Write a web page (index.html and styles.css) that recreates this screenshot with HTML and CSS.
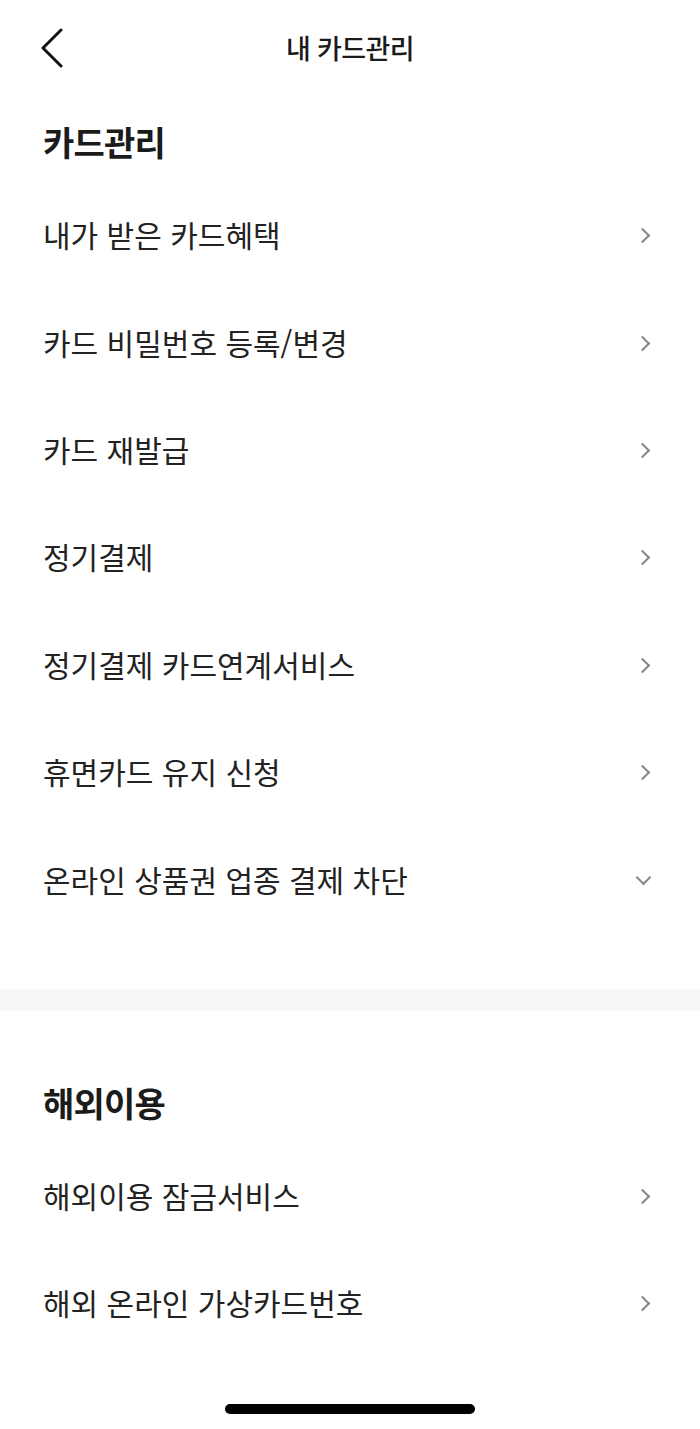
FILE: index.html
```html
<!DOCTYPE html>
<html lang="ko">

<head>
    <meta charset="UTF-8">
    <meta name="viewport" content="width=device-width, initial-scale=1.0">
    <title>내 카드관리</title>
    <link rel="stylesheet" href="styles.css">
</head>

<body>
    <div class="app">
        <header class="top-bar">
            <button class="back-btn" aria-label="뒤로">
                <svg width="24" height="40" viewBox="0 0 24 40">
                    <path d="M21 2 L3 20 L21 38" fill="none" stroke="#111" stroke-width="3" stroke-linecap="round" stroke-linejoin="round" />
                </svg>
            </button>
            <h1 class="top-title">내 카드관리</h1>
        </header>

        <section class="menu-section">
            <h2 class="section-title">카드관리</h2>
            <ul class="menu-list">
                <li class="menu-item"><span>내가 받은 카드혜택</span><i class="chev"></i></li>
                <li class="menu-item"><span>카드 비밀번호 등록/변경</span><i class="chev"></i></li>
                <li class="menu-item"><span>카드 재발급</span><i class="chev"></i></li>
                <li class="menu-item"><span>정기결제</span><i class="chev"></i></li>
                <li class="menu-item"><span>정기결제 카드연계서비스</span><i class="chev"></i></li>
                <li class="menu-item"><span>휴면카드 유지 신청</span><i class="chev"></i></li>
                <li class="menu-item"><span>온라인 상품권 업종 결제 차단</span><i class="chev chev-down"></i></li>
            </ul>
        </section>

        <div class="section-gap"></div>

        <section class="menu-section menu-section-second">
            <h2 class="section-title">해외이용</h2>
            <ul class="menu-list">
                <li class="menu-item"><span>해외이용 잠금서비스</span><i class="chev"></i></li>
                <li class="menu-item"><span>해외 온라인 가상카드번호</span><i class="chev"></i></li>
            </ul>
        </section>

        <div class="home-bar"></div>
    </div>
</body>

</html>
```

FILE: styles.css
```css
* {
    box-sizing: border-box;
}

body {
    margin: 0;
    background-color: #ffffff;
    font-family: 'Noto Sans CJK KR', 'Noto Sans', sans-serif;
    color: #1b1b1b;
}

.app {
    width: 700px;
    height: 1429px;
    display: flex;
    flex-direction: column;
}

.top-bar {
    height: 94px;
    display: flex;
    align-items: center;
    justify-content: center;
    position: relative;
}

.back-btn {
    position: absolute;
    left: 40px;
    top: 28px;
    border: none;
    background: none;
    padding: 0;
    line-height: 0;
}

.top-title {
    margin: 0;
    font-size: 27px;
    font-weight: 500;
    letter-spacing: -0.6px;
}

.menu-section {
    padding: 0 48px 0 43px;
}

.section-title {
    margin: 28px 0 20px;
    height: 40px;
    line-height: 40px;
    font-size: 34px;
    font-weight: 700;
    letter-spacing: -0.8px;
}

.menu-section-second .section-title {
    margin-top: 72px;
}

.menu-list {
    list-style: none;
    margin: 0;
    padding: 0;
}

.menu-item {
    height: 107.4px;
    display: flex;
    align-items: center;
    justify-content: space-between;
    font-size: 30px;
    font-weight: 400;
    color: #222;
}

.menu-item span {
    margin-top: -3px;
}

.chev {
    width: 11px;
    height: 11px;
    border-top: 2.5px solid #84878e;
    border-right: 2.5px solid #84878e;
    transform: rotate(45deg);
    margin-right: 4px;
}

.chev.chev-down {
    transform: rotate(135deg);
    margin-right: 3px;
    margin-top: -6px;
}

.section-gap {
    height: 22px;
    margin-top: 55px;
    background-color: #f6f7f9;
}

.home-bar {
    width: 250px;
    height: 10px;
    border-radius: 5px;
    background-color: #000;
    margin: auto auto 15px;
}
```
